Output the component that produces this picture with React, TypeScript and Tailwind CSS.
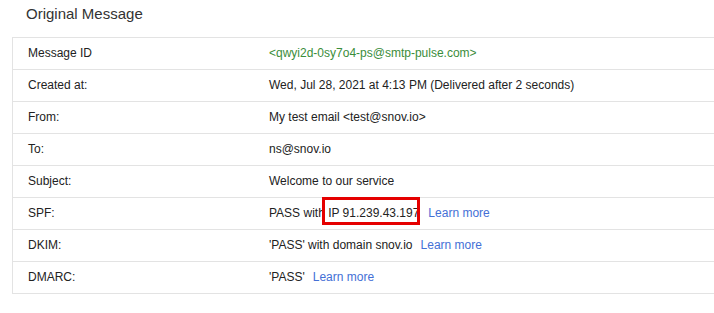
const rows: { label: string; value: React.ReactNode }[] = [
  {
    label: "Message ID",
    value: <span className="text-[#3a8d3a]">&lt;qwyi2d-0sy7o4-ps@smtp-pulse.com&gt;</span>,
  },
  { label: "Created at:", value: "Wed, Jul 28, 2021 at 4:13 PM (Delivered after 2 seconds)" },
  { label: "From:", value: "My test email <test@snov.io>" },
  { label: "To:", value: "ns@snov.io" },
  { label: "Subject:", value: "Welcome to our service" },
  {
    label: "SPF:",
    value: (
      <>
        PASS with{" "}
        <span className="relative">
          IP 91.239.43.197
          {/* highlight box drawn over the text */}
          <span className="absolute left-[-6px] top-[-9px] w-[98px] h-[28px] border-[3px] border-[#e50000]" />
        </span>
        <a className="ml-[9px] text-[#4470d6]">Learn more</a>
      </>
    ),
  },
  {
    label: "DKIM:",
    value: (
      <>
        'PASS' with domain snov.io
        <a className="ml-[8px] text-[#4470d6]">Learn more</a>
      </>
    ),
  },
  {
    label: "DMARC:",
    value: (
      <>
        'PASS'
        <a className="ml-[8px] text-[#4470d6]">Learn more</a>
      </>
    ),
  },
];

export default function App() {
  return (
    <div className="w-[714px] h-[313px] bg-white overflow-hidden font-['Liberation_Sans',Arial,sans-serif]">
      <h2 className="pl-[26px] pt-[5px] h-[37px] text-[15px] leading-[18px] text-[#333]">
        Original Message
      </h2>
      <div className="ml-[12px] border-l border-b border-[#e3e3e3]">
        {rows.map((row) => (
          <div
            key={row.label}
            className="flex items-center h-[32px] pb-[1px] border-t border-[#e3e3e3] pl-[15px] text-[12px] text-[#222]"
          >
            <div className="w-[241px] shrink-0">{row.label}</div>
            <div className="whitespace-nowrap">{row.value}</div>
          </div>
        ))}
      </div>
    </div>
  );
}
